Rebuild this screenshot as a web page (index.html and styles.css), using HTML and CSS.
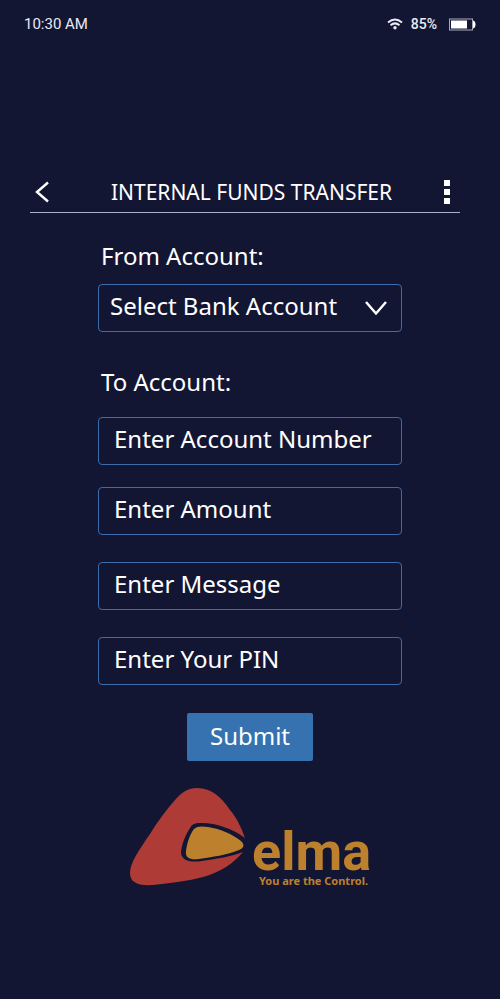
FILE: index.html
```html
<!DOCTYPE html>
<html lang="en">
  <head>
    <meta charset="utf-8">
    <meta name="viewport" content="width=device-width, initial-scale=1">
    <title>Internal Funds Transfer</title>
    <link rel="stylesheet" href="styles.css">
  </head>
  <body>
    <div class="status-bar">
      <span class="time">10:30 AM</span>
      <div class="status-icons">
        <svg class="wifi" width="16" height="12" viewBox="0 0 16 12" fill="none" stroke="#e9eaf3" stroke-width="2">
          <path d="M1 4.600Q8 -1.600 15 4.600" />
          <path d="M3.500 7.300Q8 3.400 12.500 7.300" />
          <circle cx="8" cy="9.700" r="1.700" fill="#e9eaf3" stroke="none" />
        </svg>
        <span class="percent">85%</span>
        <svg class="battery" width="27" height="13" viewBox="0 0 27 13">
          <rect x="0.500" y="1" width="23" height="11" fill="none" stroke="#a9aaba" />
          <rect x="2" y="2.500" width="16" height="8" fill="#fff" />
          <path d="M24 2.500Q26.500 3 26.500 6.500T24 10.500Z" fill="#fff" />
        </svg>
      </div>
    </div>

    <header class="header">
      <button class="icon-button" type="button" aria-label="Back">
        <svg width="24" height="22" viewBox="0 0 24 22" fill="none" stroke="#fff" stroke-width="2.400">
          <path d="M13 1.500L2 11L13 20.500" />
        </svg>
      </button>
      <h1 class="title">INTERNAL FUNDS TRANSFER</h1>
      <button class="icon-button" type="button" aria-label="Menu">
        <svg width="6" height="24" viewBox="0 0 6 24" fill="#fff">
          <rect width="6" height="6" />
          <rect y="9" width="6" height="6" />
          <rect y="18" width="6" height="6" />
        </svg>
      </button>
    </header>

    <form class="transfer-form">
      <label class="label" for="from">From Account:</label>
      <div class="select-box">
        <select class="field" id="from" name="from">
          <option>Select Bank Account</option>
        </select>
        <svg class="chevron" width="22" height="14" viewBox="0 0 22 14" fill="none" stroke="#fff" stroke-width="2.400">
          <path d="M1 1L11 12.500L21 1" />
        </svg>
      </div>

      <label class="label" for="account">To Account:</label>
      <div class="fields">
        <div class="field-group">
          <input class="field" type="text" id="account" name="account" placeholder="Enter Account Number">
          <input class="field" type="text" name="amount" placeholder="Enter Amount" aria-label="Amount">
        </div>
        <input class="field" type="text" name="message" placeholder="Enter Message" aria-label="Message">
        <input class="field" type="password" name="pin" placeholder="Enter Your PIN" aria-label="PIN">
      </div>

      <button class="submit" type="submit">Submit</button>
    </form>

    <footer class="footer">
      <svg class="logo" width="244" height="102" viewBox="0 0 244 102">
        <path fill="#ae3b36" d="M69 1C60 1 54 5 47 13C38 23 30 34 22 47C11 63 2 76 2 86C2 95 9 99 25 98C43 96 60 94 75 90C93 85 106 76 115 65C102 70 87 72 74 74C61 76 53 73 53 65C54 56 58 47 62 41C65 36 68 36 74 36C88 36 105 42 117 51C113 40 109 31 102 23C94 11 84 1 69 1Z" />
        <path fill="#bd812d" d="M66 42C69 39 74 39 80 40C93 42 104 47 113 54C117 58 116 61 111 63C99 68 84 70 71 72C62 73 57 71 58 64C59 56 62 47 66 42Z" />
        <text class="logo-name" x="124" y="83">elma</text>
        <text class="logo-tag" x="131" y="98">You are the Control.</text>
      </svg>
    </footer>
  </body>
</html>
```

FILE: styles.css
```css
* {
  box-sizing: border-box;
}

body {
  margin: 0;
  background-color: #131633;
  color: #fff;
  font-family: "Noto Sans", "Open Sans", sans-serif;
}

.status-bar {
  display: flex;
  justify-content: space-between;
  align-items: center;
  height: 48px;
  padding: 0 24px;
  color: #e9eaf3;
  font-family: Roboto, sans-serif;
}

.time {
  font-size: 15px;
}

.status-icons {
  display: flex;
  align-items: center;
}

.percent {
  margin: 0 12px 0 8px;
  font-size: 14px;
  font-weight: 500;
}

.header {
  display: flex;
  justify-content: space-between;
  align-items: center;
  height: 41px;
  margin: 124px 40px 0 30px;
  padding: 0 10px 0 5px;
  border-bottom: 1px solid #a9b0d0;
}

.icon-button {
  display: flex;
  padding: 0;
  border: 0;
  background: none;
  cursor: pointer;
}

.title {
  margin: 0;
  font-size: 21px;
  font-weight: 400;
}

.transfer-form {
  display: flex;
  flex-direction: column;
  max-width: 304px;
  margin: 23px auto 0;
}

.label {
  padding-left: 3px;
  font-size: 24px;
  line-height: 40px;
}

.select-box {
  position: relative;
  margin: 8px 0 30px;
}

.field {
  display: block;
  width: 100%;
  height: 48px;
  padding: 0 15px 5px;
  border: 1px solid #3a6cab;
  border-radius: 4px;
  background: none;
  color: #fff;
  font-family: inherit;
  font-size: 24px;
}

.field::placeholder {
  color: #fff;
  opacity: 1;
}

select.field {
  padding-left: 11px;
  appearance: none;
}

.field option {
  background-color: #131633;
}

.chevron {
  position: absolute;
  top: 17px;
  right: 15px;
  pointer-events: none;
}

.fields {
  display: grid;
  gap: 27px;
  margin-top: 15px;
}

.field-group {
  display: grid;
  gap: 22px;
}

.submit {
  align-self: center;
  width: 126px;
  height: 48px;
  margin-top: 28px;
  padding: 0 0 4px;
  border: 0;
  border-radius: 2px;
  background-color: #3572af;
  color: #fff;
  font-family: inherit;
  font-size: 24px;
  cursor: pointer;
}

.footer {
  display: flex;
  justify-content: center;
  margin-top: 26px;
}

.logo-name {
  fill: #bd812d;
  font-family: Roboto, sans-serif;
  font-size: 54px;
  font-weight: 700;
}

.logo-tag {
  fill: #bd812d;
  font-family: "Noto Sans", sans-serif;
  font-size: 11px;
  font-weight: 700;
}
```
